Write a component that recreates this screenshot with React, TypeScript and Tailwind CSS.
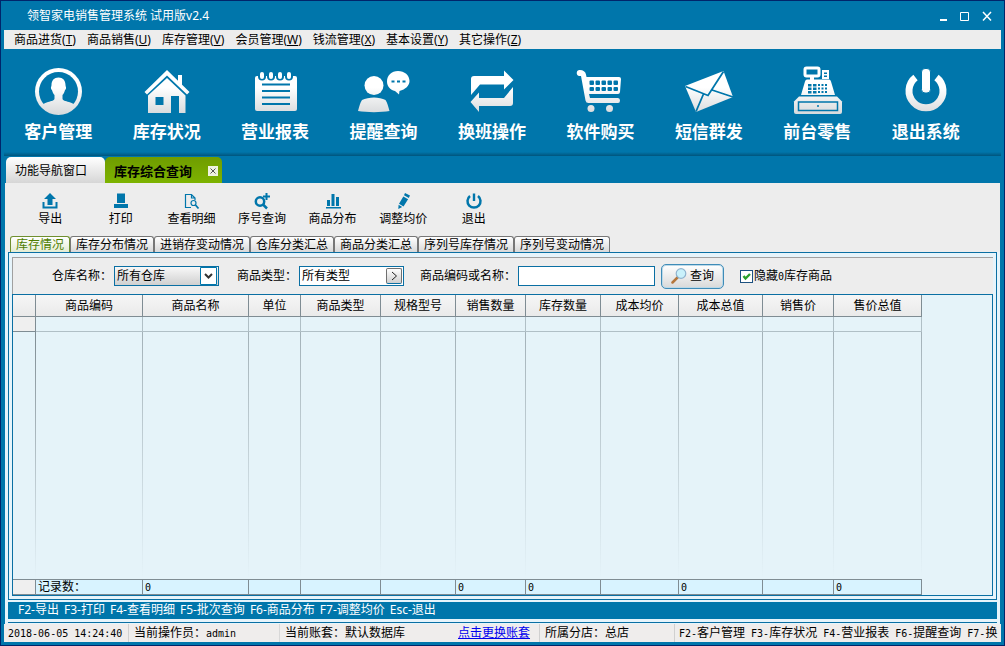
import { ReactNode } from 'react';

const menus = [
  ['商品进货', 'T'],
  ['商品销售', 'U'],
  ['库存管理', 'V'],
  ['会员管理', 'W'],
  ['钱流管理', 'X'],
  ['基本设置', 'Y'],
  ['其它操作', 'Z'],
];

const subTabs = ['库存情况', '库存分布情况', '进销存变动情况', '仓库分类汇总', '商品分类汇总', '序列号库存情况', '序列号变动情况'];

const columns = [
  { title: '商品编码', width: 107, total: '' },
  { title: '商品名称', width: 106, total: '0' },
  { title: '单位', width: 52, total: '' },
  { title: '商品类型', width: 80, total: '' },
  { title: '规格型号', width: 75, total: '' },
  { title: '销售数量', width: 70, total: '0' },
  { title: '库存数量', width: 75, total: '0' },
  { title: '成本均价', width: 78, total: '' },
  { title: '成本总值', width: 84, total: '0' },
  { title: '销售价', width: 71, total: '' },
  { title: '售价总值', width: 88, total: '0' },
];

const shortcuts = ['F2-导出', 'F3-打印', 'F4-查看明细', 'F5-批次查询', 'F6-商品分布', 'F7-调整均价', 'Esc-退出'];

const statusKeys = [
  ['F2-', '客户管理'],
  ['F3-', '库存状况'],
  ['F4-', '营业报表'],
  ['F6-', '提醒查询'],
  ['F7-', '换'],
];

const BLUE = '#0076ab';
const FILL = 'url(#silver)';

const ribbon: { label: string; icon: ReactNode }[] = [
  {
    label: '客户管理',
    icon: (
      <>
        <circle cx="26.500" cy="25.500" r="23.500" fill={FILL} />
        <circle cx="26.500" cy="25.500" r="19.500" fill={BLUE} />
        <path d="M26.500 11.500c4.500 0 7 3 7 7.500 0 1.500.8 2 .5 3.500-.3 1.300-1 1.500-1.300 2.500-.5 1.800-1.200 3-2.200 4v3.500c0 2 3 2.500 6.500 3.500 3 1 5 1.800 5.500 3A21.500 21.500 0 0 1 26.500 47 21.500 21.500 0 0 1 10.500 39c.5-1.200 2.500-2 5.500-3 3.500-1 6.500-1.500 6.500-3.500V29c-1-1-1.700-2.200-2.200-4-.3-1-1-1.200-1.300-2.500-.3-1.500.5-2 .5-3.500 0-4.500 2.500-7.500 7-7.500z" fill={FILL} />
      </>
    ),
  },
  {
    label: '库存状况',
    icon: (
      <>
        <path d="M38 9h4v12l-4-4zM27 4l22.500 22-2.500 2.500L27 9.500 7 28.500 4.500 26z" fill={FILL} />
        <path d="M27 12l18.500 17.500V47H39V30h-8v17H8V29.500z" fill={FILL} />
        <path d="M15.500 31h8v8h-8z" fill={BLUE} />
      </>
    ),
  },
  {
    label: '营业报表',
    icon: (
      <>
        <rect x="6" y="10" width="42" height="35" rx="2" fill={FILL} />
        {[13, 22, 31, 40].map((x) => (
          <g key={x}>
            <circle cx={x} cy="10.500" r="4" fill={BLUE} />
            <rect x={x - 2} y="6" width="4" height="7" rx="2" fill={FILL} />
          </g>
        ))}
        <path d="M13 18.500h28M13 25h28M13 31.500h28M13 38h28" stroke={BLUE} strokeWidth="2" />
      </>
    ),
  },
  {
    label: '提醒查询',
    icon: (
      <>
        <circle cx="17" cy="19.500" r="9.500" fill={FILL} />
        <path d="M1 45c1.500-5 2-8 4-11 3-1.500 8-2.500 12-2.500s8.500 1 11.500 2.500c2 3 2.500 6 4 11-8 1.500-23 1.500-31.500 0z" fill={FILL} />
        <path d="M41 5c6.500 0 11.500 4.300 11.500 10 0 4.500-4 8.500-10 10l-.5 3.500-4-3.500C33 24 30 20 30 15.500 30 9.500 34.500 5 41 5z" fill={FILL} />
        <path d="M34.500 14.500h3v2h-3zM40 14.500h3v2h-3zM45.500 14.500h3v2h-3z" fill={BLUE} />
      </>
    ),
  },
  {
    label: '换班操作',
    icon: (
      <>
        <path d="M6 29V13q0-3 3-3h30V4.500L48.500 14 39 23.500V18.500H15z" fill={FILL} />
        <path d="M48 21v16q0 3-3 3H14v6L5.500 36l8.500-9.500V32h25z" fill={FILL} />
      </>
    ),
  },
  {
    label: '软件购买',
    icon: (
      <>
        <path d="M6 4c3 0 5.500 1.500 6 4.500l.5 2.500H45q2 0 2 2l-1 13q-.3 2-2 2H15l1 4h28q2 0 2 2.500T44 37H14.500q-2.500 0-3-2.500L7 10H5.500a3 3 0 0 1 .5-6z" fill={FILL} />
        {[15.5, 21.5, 27.5, 33.5, 39.5].map((x) => (
          <g key={x} fill={BLUE}>
            <rect x={x} y="14.500" width="4.500" height="4.500" rx="1" />
            <rect x={x} y="21" width="4.500" height="4" rx="1" />
          </g>
        ))}
        <circle cx="17" cy="42.500" r="3.500" fill={FILL} />
        <circle cx="35.500" cy="42.500" r="3.500" fill={FILL} />
      </>
    ),
  },
  {
    label: '短信群发',
    icon: (
      <>
        <path d="M3 20L41.500 5 51 31 14 46z" fill={FILL} />
        <path d="M3.500 20.500L26 29.500 41.500 5.500M21.500 28L14 45.500M30 24L51 31" stroke={BLUE} strokeWidth="1.800" fill="none" />
      </>
    ),
  },
  {
    label: '前台零售',
    icon: (
      <>
        <rect x="14" y="2" width="14" height="8" rx="1.500" fill="none" stroke={FILL} strokeWidth="3" />
        <path d="M19 11h4v4h-4zM31 4h7v9h-7zM16 13.500h22q1.500 0 2 2L44 29H10l4-13.500q.5-2 2-2z" fill={FILL} />
        <path d="M33 6.500h3v1.500h-3zM33 9.500h3v1.500h-3z" fill={BLUE} />
        {[18, 21.5, 25].map((y) => (
          <path key={y} d={`M17 ${y}h3.500v2.500h-3.500zM22 ${y}h3.500v2.500h-3.500zM27 ${y}h2v2h-2zM30.500 ${y}h2v2h-2zM34 ${y}h2v2h-2z`} fill={BLUE} />
        ))}
        <path d="M8 30.500h38l5 5V46q0 2-2 2H5q-2 0-2-2V35.500z" fill={FILL} />
        <rect x="7.500" y="36" width="39" height="8.500" fill="none" stroke={BLUE} strokeWidth="1.500" />
        <circle cx="27" cy="40" r="1" fill={BLUE} />
      </>
    ),
  },
  {
    label: '退出系统',
    icon: (
      <>
        <path d="M16.500 11.500A17 17 0 1 0 37.500 11.500" fill="none" stroke={FILL} strokeWidth="7" />
        <rect x="22.500" y="2.500" width="9" height="24.500" rx="3.500" fill={FILL} stroke={BLUE} strokeWidth="1" />
      </>
    ),
  },
];

const tools: { label: string; icon: ReactNode }[] = [
  {
    label: '导出',
    icon: (
      <>
        <path d="M9 1l6 6h-3.500v6h-5V7H3z" fill={BLUE} />
        <path d="M2.500 10v5.500h13V10" fill="none" stroke={BLUE} strokeWidth="2" />
      </>
    ),
  },
  { label: '打印', icon: <path d="M5 1.500h8V11H5zM2 12h14v4H2z" fill={BLUE} /> },
  {
    label: '查看明细',
    icon: (
      <g fill="none" stroke={BLUE} strokeWidth="1.200">
        <path d="M9 15.500H3.500V2.500h6l3.500 3.500v2M9.500 2.500V6H13" />
        <circle cx="11.500" cy="11" r="2.500" />
        <path d="M13.500 13l3 3.500" strokeWidth="1.800" />
      </g>
    ),
  },
  {
    label: '序号查询',
    icon: (
      <g fill="none" stroke={BLUE} strokeWidth="2.500">
        <circle cx="7" cy="9.500" r="4.200" />
        <path d="M10 12.500l4 4" />
        <path d="M13.500 1v7M10 4.500h7" strokeWidth="2" />
      </g>
    ),
  },
  { label: '商品分布', icon: <path d="M3 8h3v6H3zM7.500 2h3v12h-3zM12 5h3v9h-3zM2 15h15v1.500H2z" fill={BLUE} /> },
  {
    label: '调整均价',
    icon: <path d="M11 1l5 2.500-1.200 2.500-4.800-2.800zM9.300 4.500l4.800 2.800-4.600 7.200-4.500-2.700zM4.600 12.800l3.600 2.200L4.300 17z" fill={BLUE} />,
  },
  {
    label: '退出',
    icon: (
      <>
        <path d="M5 4A6.500 6.500 0 1 0 13 4" fill="none" stroke={BLUE} strokeWidth="2.500" />
        <path d="M7.800 1.500h2.400V9H7.800z" fill={BLUE} />
      </>
    ),
  },
];

function Mono({ children }: { children: ReactNode }) {
  return <span className="font-['DejaVu_Sans_Mono',monospace] text-[10px] leading-none">{children}</span>;
}

function TitleBar() {
  return (
    <header className="flex h-[29px] items-center justify-between pl-[23px] pr-2 text-white">
      <h1>领智家电销售管理系统 试用版v2.4</h1>
      <div className="flex gap-[11px]">
        <button type="button" aria-label="最小化" className="h-3 w-[11px]">
          <svg viewBox="0 0 11 12" className="block h-3 w-[11px]"><path d="M2 9h7v2H2z" fill="white" /></svg>
        </button>
        <button type="button" aria-label="最大化" className="h-3 w-[11px]">
          <svg viewBox="0 0 11 12" className="block h-3 w-[11px]"><path d="M.5 2.500h8v8h-8z" fill="none" stroke="white" /></svg>
        </button>
        <button type="button" aria-label="关闭" className="h-3 w-[11px]">
          <svg viewBox="0 0 11 12" className="block h-3 w-[11px]"><path d="M1 2l8 8.500M9 2l-8 8.500" stroke="white" strokeWidth="1.500" /></svg>
        </button>
      </div>
    </header>
  );
}

function Ribbon() {
  return (
    <div className="relative grid h-[107px] grid-cols-9 pr-[21px]">
      {ribbon.map((item) => (
        <button key={item.label} type="button" className="flex flex-col items-center pt-[17px] text-white">
          <svg viewBox="0 0 53 52" className="h-[52px] w-[53px] shrink-0">
            {item.icon}
          </svg>
          <span className="mt-1 text-[17px] leading-5 font-bold">{item.label}</span>
        </button>
      ))}
      <div className="absolute inset-x-0 bottom-0 h-1 bg-linear-to-b from-[#0076ab] to-[#00557d]" />
    </div>
  );
}

function Filters() {
  return (
    <form className="flex h-[37px] items-center border-t border-l border-[#a0a0a0] bg-[#ededed] pl-[39px]" onSubmit={(e) => e.preventDefault()}>
      <label htmlFor="warehouse" className="w-[62px]">仓库名称：</label>
      <div className="relative">
        <select id="warehouse" className="block h-5 w-[105px] appearance-none border border-[#0a6fa3] bg-linear-to-b from-[#f8f8f8] to-[#d0d0d0] pl-[2px]">
          <option>所有仓库</option>
        </select>
        <svg viewBox="0 0 18 18" className="pointer-events-none absolute top-px right-px size-[18px]">
          <path d="M.5.5h16v17H.5z" fill="white" stroke={BLUE} />
          <path d="M5 7l3.500 3.500L12 7" fill="none" stroke="#333" strokeWidth="2" />
        </svg>
      </div>
      <label htmlFor="category" className="ml-[18px] w-[62px]">商品类型：</label>
      <div className="flex h-5 w-[105px] items-center border border-[#0a6fa3] bg-white pr-px">
        <input id="category" defaultValue="所有类型" className="w-full min-w-0 pl-[2px] outline-none" />
        <button type="button" aria-label="选择类型" className="h-4 w-4 shrink-0 rounded-xs border border-[#707070] border-b-[#0a6fa3] bg-linear-to-b from-white to-[#cfcfcf]">
          <svg viewBox="0 0 14 14" className="size-[14px]"><path d="M5 3l4.500 4L5 11" fill="none" stroke="#222" /></svg>
        </button>
      </div>
      <label htmlFor="keyword" className="ml-4 w-[98px]">商品编码或名称：</label>
      <input id="keyword" className="h-5 w-[137px] border border-[#0a6fa3] bg-white px-1 outline-none" />
      <button type="submit" className="ml-[6px] flex h-[25px] w-[63px] items-center justify-center gap-[3px] rounded-[5px] border border-[#3f8cb8] bg-linear-to-b from-white to-[#d9d9d9] shadow-[inset_0_0_0_1px_#bcd9e8]">
        <svg viewBox="0 0 16 16" className="size-4">
          <path d="M1.500 14.500L7 9" stroke="#b5773c" strokeWidth="2.500" strokeLinecap="round" />
          <circle cx="10" cy="5.500" r="4.800" fill="#c9f1fb" stroke="#8fb3cf" strokeWidth="1.200" />
        </svg>
        查询
      </button>
      <label className="ml-4 flex items-center">
        <span className="relative flex">
          <input type="checkbox" defaultChecked className="peer size-[13px] appearance-none border border-[#1c5180] bg-white" />
          <svg viewBox="0 0 13 13" className="pointer-events-none absolute inset-0 hidden size-[13px] peer-checked:block">
            <path d="M3.500 6l2 2.500 4.500-4.500" fill="none" stroke="#2aa02a" strokeWidth="2.400" />
          </svg>
        </span>
        <span className="ml-px">隐藏<Mono>0</Mono>库存商品</span>
      </label>
    </form>
  );
}

function StockTable() {
  return (
    <div className="grid flex-1 justify-start border border-[#0a6fa3] bg-[#e5f3f9]">
      <table className="h-full w-[909px] table-fixed border-separate border-spacing-0">
        <colgroup>
          <col style={{ width: 23 }} />
          {columns.map((c) => (
            <col key={c.title} style={{ width: c.width }} />
          ))}
        </colgroup>
        <thead>
          <tr className="h-[22px] bg-linear-to-b from-[#f6f6f6] to-[#e9e9e9]">
            <td className="border-r border-b border-[#7f8c93]" />
            {columns.map((c) => (
              <th key={c.title} className="border-r border-b border-[#7f8c93] p-0 font-normal">{c.title}</th>
            ))}
          </tr>
        </thead>
        <tbody>
          <tr className="h-[15px]">
            <td className="border-r border-b border-[#7f8c93] bg-[#efefef]" />
            {columns.map((c) => (
              <td key={c.title} className="border-r border-b border-[#b0bfc6]" />
            ))}
          </tr>
          <tr className="h-full">
            <td className="bg-[linear-gradient(to_bottom,#7f8c93,#e5f3f9)] bg-[length:1px_100%] bg-right bg-no-repeat" />
            {columns.map((c) => (
              <td key={c.title} className="bg-[linear-gradient(to_bottom,#a3b1b8,#e5f3f9)] bg-[length:1px_100%] bg-right bg-no-repeat" />
            ))}
          </tr>
        </tbody>
        <tfoot>
          <tr className="h-4 bg-[#d8f3ff] leading-[14px]">
            <td className="border-y border-r border-[#7f8c93] bg-[#efefef] p-0" />
            {columns.map((c, i) => (
              <td key={c.title} className="border-y border-r border-[#7f8c93] p-0 pl-[2px]">
                {i === 0 ? '记录数：' : <Mono>{c.total}</Mono>}
              </td>
            ))}
          </tr>
        </tfoot>
      </table>
    </div>
  );
}

function StatusBar() {
  return (
    <footer className="flex h-[18px] items-center overflow-hidden bg-[#efedec] leading-[18px] whitespace-nowrap">
      <span className="w-[125px] shrink-0 border-r border-[#d0d0d0] pl-1"><Mono>2018-06-05 14:24:40</Mono></span>
      <span className="w-[151px] shrink-0 border-r border-[#d8d8d8] pl-[5px]">当前操作员：<Mono>admin</Mono></span>
      <span className="w-[173px] shrink-0 pl-[5px]">当前账套：默认数据库</span>
      <span className="w-[87px] shrink-0 border-r border-[#d0d0d0] pl-[5px]">
        <a href="#" className="text-[#0000ee] underline">点击更换账套</a>
      </span>
      <span className="w-[135px] shrink-0 border-r border-[#d0d0d0] pl-[5px]">所属分店：总店</span>
      <span className="flex min-w-0 flex-1 gap-[6px] pl-1">
        {statusKeys.map(([key, label]) => (
          <span key={key} className="shrink-0"><Mono>{key}</Mono>{label}</span>
        ))}
      </span>
    </footer>
  );
}

export default function App() {
  return (
    <div className="flex min-h-screen flex-col border border-[#00256b] bg-[#0076ab] px-[3px] pb-[3px] font-['Noto_Sans','Noto_Sans_CJK_SC',sans-serif] text-[12px] leading-4 text-black">
      <svg className="absolute size-0" aria-hidden="true">
        <linearGradient id="silver" gradientUnits="userSpaceOnUse" x1="0" y1="4" x2="0" y2="48">
          <stop offset="0.400" stopColor="#ffffff" />
          <stop offset="1" stopColor="#d8dadc" />
        </linearGradient>
      </svg>
      <TitleBar />
      <nav className="flex h-[19px] items-center gap-[11px] bg-[#ededed] pl-[10px]">
        {menus.map(([label, key]) => (
          <button key={key} type="button" className="whitespace-nowrap">
            {label}(<u>{key}</u>)
          </button>
        ))}
      </nav>
      <Ribbon />
      <div className="flex h-[27px] items-end pl-[2px]">
        <button type="button" className="h-[26px] w-[99px] rounded-t-[5px] bg-linear-to-b from-white to-[#d6d6d6] pt-px pl-[9px] text-left">
          功能导航窗口
        </button>
        <div className="flex h-[26px] w-[117px] items-center justify-between rounded-t-[5px] bg-linear-to-b from-[#6f9c00] to-[#7db300] pt-px pr-1 pl-[9px]">
          <button type="button" className="text-[13px] font-bold">库存综合查询</button>
          <button type="button" aria-label="关闭标签" className="size-[10px] bg-[#eef2e0]">
            <svg viewBox="0 0 10 10" className="block size-[10px]"><path d="M2.500 2.500l5 5M7.500 2.500l-5 5" stroke="#555" /></svg>
          </button>
        </div>
      </div>
      <main className="mx-px flex flex-1 flex-col bg-[#ededed]">
        <div className="ml-[10px] grid h-[53px] w-[494px] grid-cols-7">
          {tools.map((tool) => (
            <button key={tool.label} type="button" className="flex flex-col items-center gap-px pt-[9px]">
              <svg viewBox="0 0 18 18" className="size-[18px] shrink-0">{tool.icon}</svg>
              {tool.label}
            </button>
          ))}
        </div>
        <div className="flex pl-[5px]">
          {subTabs.map((tab, i) => (
            <button
              key={tab}
              type="button"
              className={
                i === 0
                  ? 'h-4 rounded-t-[3px] border border-b-0 border-[#6f8f2f] bg-linear-to-b from-white to-[#e4ecd2] px-[5px] text-[#4f7d00]'
                  : 'h-4 rounded-t-[3px] border border-b-0 border-[#777] bg-linear-to-b from-white to-[#d8d8d8] px-[5px]'
              }
            >
              {tab}
            </button>
          ))}
        </div>
        <div className="flex flex-1 flex-col bg-[#e6f4fb] px-[3px] pb-px">
          <section className="flex flex-1 flex-col border border-[#0a6fa3] px-[3px] pt-1 pb-[3px]">
            <Filters />
            <StockTable />
          </section>
          <p className="mt-[2px] flex h-[17px] gap-[5px] bg-[#0076ab] pl-[10px] text-white">
            {shortcuts.map((text) => (
              <span key={text}>{text}</span>
            ))}
          </p>
          <div className="mt-[3px] border-b border-[#0a6fa3]" />
        </div>
      </main>
      <StatusBar />
    </div>
  );
}
